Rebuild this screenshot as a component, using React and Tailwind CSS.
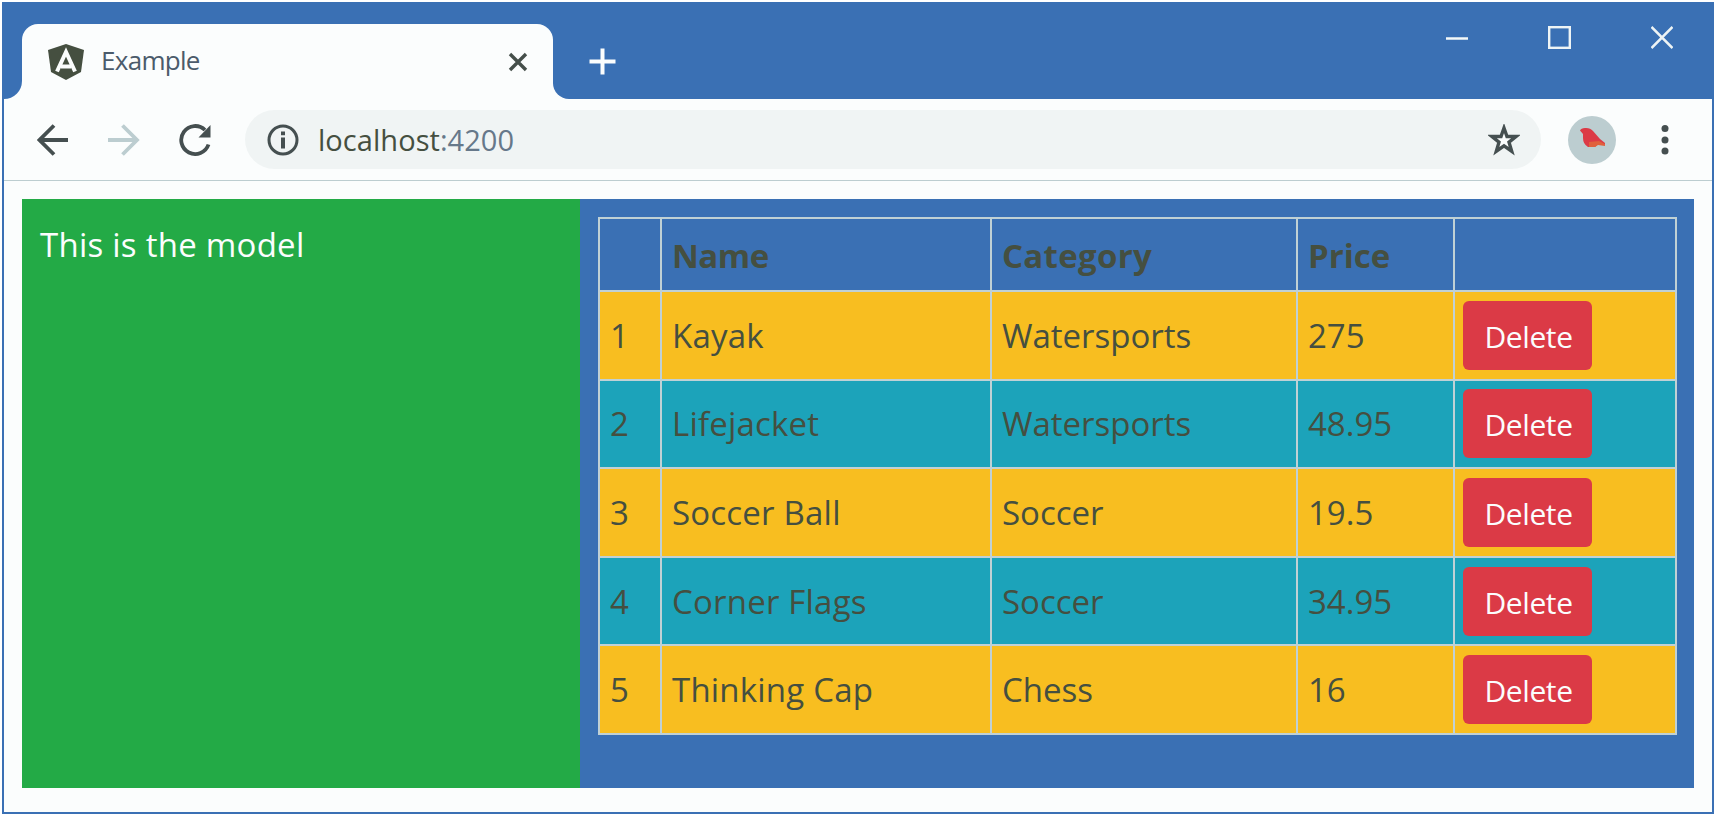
const rows = [
  { id: 1, name: "Kayak", category: "Watersports", price: "275" },
  { id: 2, name: "Lifejacket", category: "Watersports", price: "48.95" },
  { id: 3, name: "Soccer Ball", category: "Soccer", price: "19.5" },
  { id: 4, name: "Corner Flags", category: "Soccer", price: "34.95" },
  { id: 5, name: "Thinking Cap", category: "Chess", price: "16" },
];

function AngularIcon() {
  return (
    <svg className="h-9 w-[38px]" viewBox="0 0 38 36">
      <path d="M19 0 37 6 34 28 19 36 4 28 1 6Z" fill="#454f40" />
      <path d="M10 27.500 19 8l9 19.500M14 22.500h10" fill="none" stroke="#fbfdfd" strokeWidth="4" />
    </svg>
  );
}

function TitleBar() {
  return (
    <div className="flex h-[97px] bg-[#3a70b4]">
      <div className="flex h-full w-[18px] bg-[#fbfdfd]">
        <div className="h-full w-full rounded-br-[18px] bg-[#3a70b4]" />
      </div>
      <div className="flex h-full w-[531px] flex-col bg-[#3a70b4] pt-[22px]">
        <div className="flex grow items-center rounded-t-[16px] bg-[#fbfdfd] pl-[25px] pr-[25px]">
          <AngularIcon />
          <span className="ml-[16px] pb-[3px] text-[26px] leading-none tracking-[-0.7px] text-[#4b5b6b]">Example</span>
          <svg className="ml-auto h-[20px] w-[20px]" viewBox="0 0 20 20">
            <path d="M2 2 18 18M18 2 2 18" stroke="#454f4a" strokeWidth="3.400" />
          </svg>
        </div>
      </div>
      <div className="flex h-full grow bg-[#fbfdfd]">
        <div className="flex h-full grow rounded-bl-[16px] bg-[#3a70b4] pl-[36px]">
          <svg className="mt-[46px] h-[27px] w-[27px]" viewBox="0 0 27 27">
            <path d="M13.500.5v26M.5 13.500h26" stroke="#fbfdfd" strokeWidth="4" strokeLinecap="butt" />
          </svg>
          <div className="ml-auto flex items-start gap-[80px] pr-[39px] pt-[24px]">
            <svg className="h-[23px] w-[22px]" viewBox="0 0 22 23">
              <path d="M0 12.500h22" stroke="#f4f9f9" strokeWidth="2.500" />
            </svg>
            <svg className="h-[23px] w-[23px]" viewBox="0 0 23 23">
              <rect x="1.200" y="1.200" width="20.600" height="20.600" fill="none" stroke="#eef4f5" strokeWidth="2.400" />
            </svg>
            <svg className="h-[23px] w-[22px]" viewBox="0 0 22 23">
              <path d="m.500 1 21 21m0-21-21 21" stroke="#eef4f5" strokeWidth="2.500" />
            </svg>
          </div>
        </div>
      </div>
    </div>
  );
}

function Toolbar() {
  return (
    <div className="flex h-[82px] items-center border-b border-[#bccdd0] pl-[33px] pr-[43px]">
      <svg className="h-8 w-8" viewBox="0 0 32 32">
        <path d="M31 16H3M17 1.500 2.500 16 17 30.500" fill="none" stroke="#454f50" strokeWidth="3.800" />
      </svg>
      <svg className="ml-[39px] h-8 w-8" viewBox="0 0 32 32">
        <path d="M0 16h29M14.500 1.500 29 16 14.500 30.500" fill="none" stroke="#bccdd0" strokeWidth="3.800" />
      </svg>
      <svg className="ml-[39px] h-8 w-8" viewBox="0 0 32 32">
        <path d="M29.500 20.500A14 14 0 1 1 26 6" fill="none" stroke="#454f50" strokeWidth="3.800" />
        <path d="M31.500 1v12.500H19.500Z" fill="#454f50" />
      </svg>
      <div className="ml-[34px] flex h-[59px] w-[1296px] items-center rounded-full bg-[#f0f4f4] pl-[22px] pr-[21px]">
        <svg className="h-8 w-8" viewBox="0 0 32 32">
          <circle cx="16" cy="16" r="14" fill="none" stroke="#454f50" strokeWidth="3" />
          <path d="M16 13.500v11M16 7.500v3.700" stroke="#454f50" strokeWidth="4" />
        </svg>
        <span className="ml-[19px] text-[29px] leading-none tracking-[0.05px] text-[#454f40]">
          localhost<span className="text-[#66788a]">:4200</span>
        </span>
        <svg className="ml-auto h-[32px] w-[32px]" viewBox="0 0 32 32">
          <path d="m16 4 3 8.500h9l-7 5.700 2.700 9-7.700-5.400-7.700 5.400 2.700-9-7-5.700h9Z" fill="#fbfdfd" stroke="#454f50" strokeWidth="3.400" />
        </svg>
      </div>
      <svg className="ml-[27px] h-12 w-12" viewBox="0 0 48 48">
        <circle cx="24" cy="24" r="24" fill="#bccdd0" />
        <path d="M12 14.500q1-2.500 5-2.500 5-.500 8 3l7 8 5 4v2l-7-1-3 3h-7q-5-3-5-9v-4Z" fill="#dc3a46" />
        <path d="m21 26 10-1 6 3v2l-7-1-3 2h-6Z" fill="#e0603c" />
      </svg>
      <svg className="ml-auto h-8 w-2" viewBox="0 0 8 32">
        <circle cx="4" cy="4.500" r="3.500" fill="#454f50" />
        <circle cx="4" cy="16" r="3.500" fill="#454f50" />
        <circle cx="4" cy="27" r="3.500" fill="#454f50" />
      </svg>
    </div>
  );
}

const cell = "border-2 border-[#c0d1d5] p-0 pl-[10px] text-left";
const headCell = "border-2 border-[#c0d1d5] p-0 pl-[10px] pt-[2px] text-left";

function ProductTable() {
  return (
    <table className="w-[1079px] table-fixed border-collapse text-[33px] leading-none text-[#454f40]">
      <colgroup>
        <col className="w-[62px]" />
        <col className="w-[330px]" />
        <col className="w-[306px]" />
        <col className="w-[157px]" />
        <col />
      </colgroup>
      <thead>
        <tr className="h-[73px] font-bold">
          <th className={headCell} />
          <th className={headCell}><span className="tracking-[-0.5px]">Name</span></th>
          <th className={headCell}><span className="tracking-[0.3px]">Category</span></th>
          <th className={headCell}>Price</th>
          <th className={headCell} />
        </tr>
      </thead>
      <tbody>
        {rows.map((row) => (
          <tr key={row.id} className="h-[88.600px] odd:bg-[#f8be20] even:bg-[#1ca3ba]">
            <td className={cell}>{row.id}</td>
            <td className={cell}><span className="tracking-[0.2px]">{row.name}</span></td>
            <td className={cell}>{row.category}</td>
            <td className={cell}>{row.price}</td>
            <td className="border-2 border-[#c0d1d5] p-0 pl-[8px] align-middle">
              <button className="flex h-[69px] w-[129px] items-center justify-center rounded-[6px] bg-[#db3a46] pl-[2px] pt-[3px] text-[30px] leading-none tracking-[-0.4px] text-[#fbfdfd]">
                Delete
              </button>
            </td>
          </tr>
        ))}
      </tbody>
    </table>
  );
}

export default function App() {
  return (
    <div className="h-[817px] w-[1716px] bg-white p-[2px] pb-[3px] font-['Open_Sans','Noto_Sans',sans-serif]">
      <div className="flex h-[812px] w-[1712px] flex-col border-x-2 border-b-2 border-[#3a70b4] bg-[#fbfdfd]">
        <TitleBar />
        <Toolbar />
        <div className="mx-[18px] mt-[18px] flex h-[589px]">
          <div className="w-[558px] bg-[#23aa46] pl-[18px] pt-[29px] text-[33px] leading-[33px] tracking-[0.25px] text-[#fbfdfd]">
            This is the model
          </div>
          <div className="grow bg-[#3a70b4] pl-[18px] pt-[18px]">
            <ProductTable />
          </div>
        </div>
      </div>
    </div>
  );
}
